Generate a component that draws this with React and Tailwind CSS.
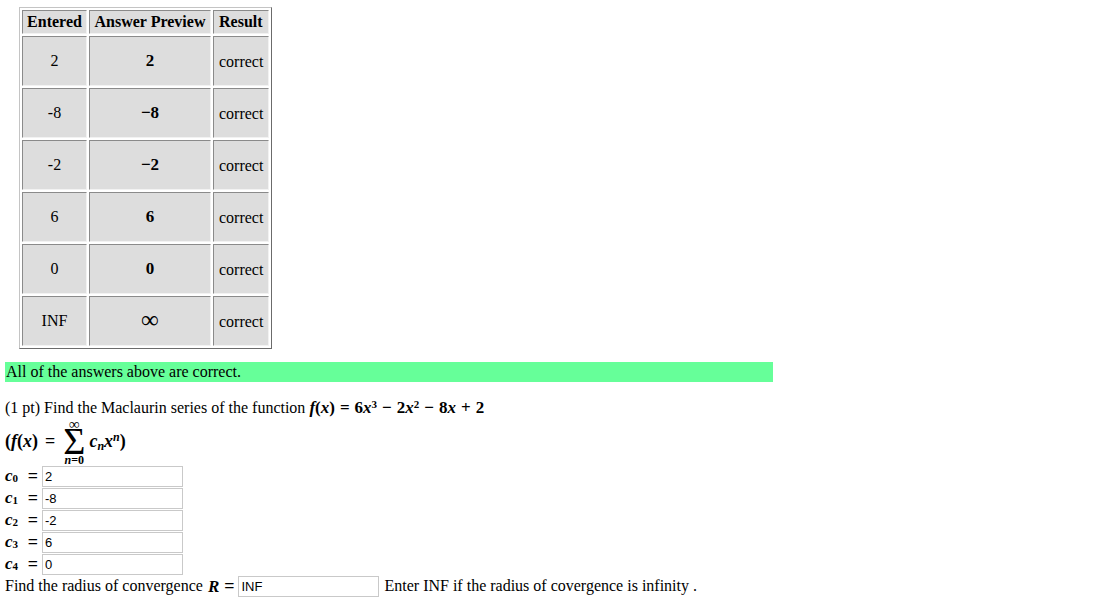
import React from "react";

// --- answer rows ---
const rows = [
  { entered: "2", preview: "2" },
  { entered: "-8", preview: "\u22128" },
  { entered: "-2", preview: "\u22122" },
  { entered: "6", preview: "6" },
  { entered: "0", preview: "0" },
  { entered: "INF", preview: "\u221E", inf: true },
];

const cellCls =
  "border border-solid border-t-[#8a8a8a] border-l-[#8a8a8a] border-b-[#f2f2f2] border-r-[#f2f2f2] bg-[#dddddd] p-0";

const V = ({ children }) => <span className="italic font-bold">{children}</span>;

const C = ({ n }) => (
  <span className="whitespace-nowrap font-bold text-[17px]">
    <V>c</V>
    <sub className="text-[11px] relative top-[1px]">{n}</sub>
  </span>
);

const Field = ({ value }) => (
  <input
    readOnly
    value={value}
    className="w-[141px] h-[21px] border border-[#c9c9c9] bg-white px-[2px] text-[13px] text-black outline-none"
    style={{ fontFamily: '"Liberation Sans", Arial, sans-serif' }}
  />
);

const coeffs = ["2", "-8", "-2", "6", "0"];

export default function App() {
  return (
    <div
      className="min-h-[614px] bg-white text-black text-[16px] pl-[5px]"
      style={{ fontFamily: '"Liberation Serif", "Times New Roman", serif' }}
    >
      <div className="pt-[7px] ml-[14px]">
        <table className="border-separate border-spacing-[2px] border border-solid border-t-[#c4c4c4] border-l-[#c4c4c4] border-b-[#6b6b6b] border-r-[#6b6b6b] bg-white">
          <thead>
            <tr>
              <th className={`${cellCls} w-[65px] h-[24px] text-center font-bold leading-[20px]`}>Entered</th>
              <th className={`${cellCls} w-[122px] h-[24px] text-center font-bold leading-[20px]`}>Answer Preview</th>
              <th className={`${cellCls} w-[56px] h-[24px] text-left pl-[5px] font-bold leading-[20px]`}>Result</th>
            </tr>
          </thead>
          <tbody>
            {rows.map((r, i) => (
              <tr key={i}>
                <td className={`${cellCls} h-[50px] text-center align-middle`}>{r.entered}</td>
                <td className={`${cellCls} h-[50px] text-center align-middle`}>
                  {r.inf ? (
                    <span className="text-[25px] leading-none">{r.preview}</span>
                  ) : (
                    <span className="font-bold text-[17px]">{r.preview}</span>
                  )}
                </td>
                <td className={`${cellCls} h-[50px] text-left pl-[5px] align-middle`}>
                  <span className="relative top-[1px]">correct</span>
                </td>
              </tr>
            ))}
          </tbody>
        </table>
      </div>

      {/* status bar */}
      <div className="mt-[13px] w-[768px] h-[20px] bg-[#66ff99] leading-[20px] pl-[1px]">
        All of the answers above are correct.
      </div>

      {/* problem text */}
      <div className="mt-[16px] leading-[20px] whitespace-nowrap">
        (1 pt) Find the Maclaurin series of the function{" "}
        <span className="font-bold text-[17px]">
          <V>f</V>(<V>x</V>)<span className="mx-[5px]">=</span>6<V>x</V>
          <sup className="text-[11px]">3</sup>
          <span className="mx-[5px]">−</span>2<V>x</V>
          <sup className="text-[11px]">2</sup>
          <span className="mx-[5px]">−</span>8<V>x</V>
          <span className="mx-[5px]">+</span>2
        </span>
      </div>

      {/* sum notation */}
      <div className="h-[47px] flex items-center font-bold text-[18px]">
        <span>
          (<V>f</V>(<V>x</V>)<span className="mx-[7px]">=</span>
        </span>
        <span className="ml-[1px] flex flex-col items-center">
          <span className="h-[12px] text-[15px] font-normal leading-[12px]">∞</span>
          <span className="h-[23px] text-[38px] leading-[22px] font-normal">Σ</span>
          <span className="h-[12px] text-[12px] leading-[12px] pt-[1px]">
            <V>n</V>=0
          </span>
        </span>
        <span className="ml-[4px]">
          <V>c</V>
          <sub className="text-[12px]">
            <V>n</V>
          </sub>
          <V>x</V>
          <sup className="text-[12px]">
            <V>n</V>
          </sup>
          )
        </span>
      </div>

      {coeffs.map((c, i) => (
        <div key={i} className="h-[22px] flex items-center">
          <span className="w-[33px] flex justify-between items-center">
            <C n={i} />
            <span className="text-[18px] font-bold">=</span>
          </span>
          <span className="ml-[4px]">
            <Field value={c} />
          </span>
        </div>
      ))}

      <div className="h-[22px] flex items-center whitespace-nowrap">
        <span>Find the radius of convergence</span>
        <span className="ml-[5px] text-[17px] font-bold">
          <V>R</V>
          <span className="ml-[5px] text-[18px]">=</span>
        </span>
        <span className="ml-[4px]">
          <Field value="INF" />
        </span>
        <span className="ml-[5px]">Enter INF if the radius of covergence is infinity .</span>
      </div>
    </div>
  );
}
